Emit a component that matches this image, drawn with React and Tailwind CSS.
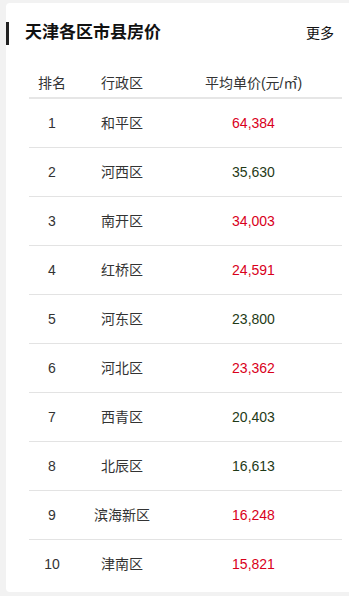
const rows = [
  { rank: 1, name: '和平区', price: '64,384', up: true },
  { rank: 2, name: '河西区', price: '35,630', up: false },
  { rank: 3, name: '南开区', price: '34,003', up: true },
  { rank: 4, name: '红桥区', price: '24,591', up: true },
  { rank: 5, name: '河东区', price: '23,800', up: false },
  { rank: 6, name: '河北区', price: '23,362', up: true },
  { rank: 7, name: '西青区', price: '20,403', up: false },
  { rank: 8, name: '北辰区', price: '16,613', up: false },
  { rank: 9, name: '滨海新区', price: '16,248', up: true },
  { rank: 10, name: '津南区', price: '15,821', up: true },
];

export default function App() {
  return (
    <div
      className="min-h-[596px] bg-[#f2f2f2] pl-[6px] pt-[3px] pb-[4px]"
      style={{ fontFamily: '"Liberation Sans", Arial, "Noto Sans CJK SC", sans-serif' }}
    >
      <div className="h-[589px] rounded-l-[4px] bg-white">
        <div className="flex items-center justify-between pt-[17px] pr-[15px]">
          <div className="flex items-center">
            <div className="h-[23px] w-[3px] bg-[#222]" />
            <h2 className="ml-[16px] text-[17px] font-bold leading-[26px] text-[#111]">天津各区市县房价</h2>
          </div>
          <span className="text-[14px] text-[#111]">更多</span>
        </div>

        <div className="ml-[23px] mr-[7px] mt-[28px]">
          <div className="flex h-[25px] items-start border-b-2 border-[#e6e6e6] text-[14px] leading-[19px] text-[#333]">
            <div className="w-[46px] text-center">排名</div>
            <div className="w-[94px] text-center">行政区</div>
            <div className="flex-1 pr-[4px] text-center">平均单价(元/㎡)</div>
          </div>
          {rows.map((r, i) => (
            <div
              key={r.rank}
              className={`flex h-[49px] items-center text-[14px] text-[#333] ${i < rows.length - 1 ? 'border-b border-[#e3e3e3]' : ''}`}
            >
              <div className="w-[46px] text-center">{r.rank}</div>
              <div className="w-[94px] text-center">{r.name}</div>
              <div className={`flex-1 pr-[4px] text-center ${r.up ? 'text-[#d9001b]' : 'text-[#1f3a17]'}`}>{r.price}</div>
            </div>
          ))}
        </div>
      </div>
    </div>
  );
}
